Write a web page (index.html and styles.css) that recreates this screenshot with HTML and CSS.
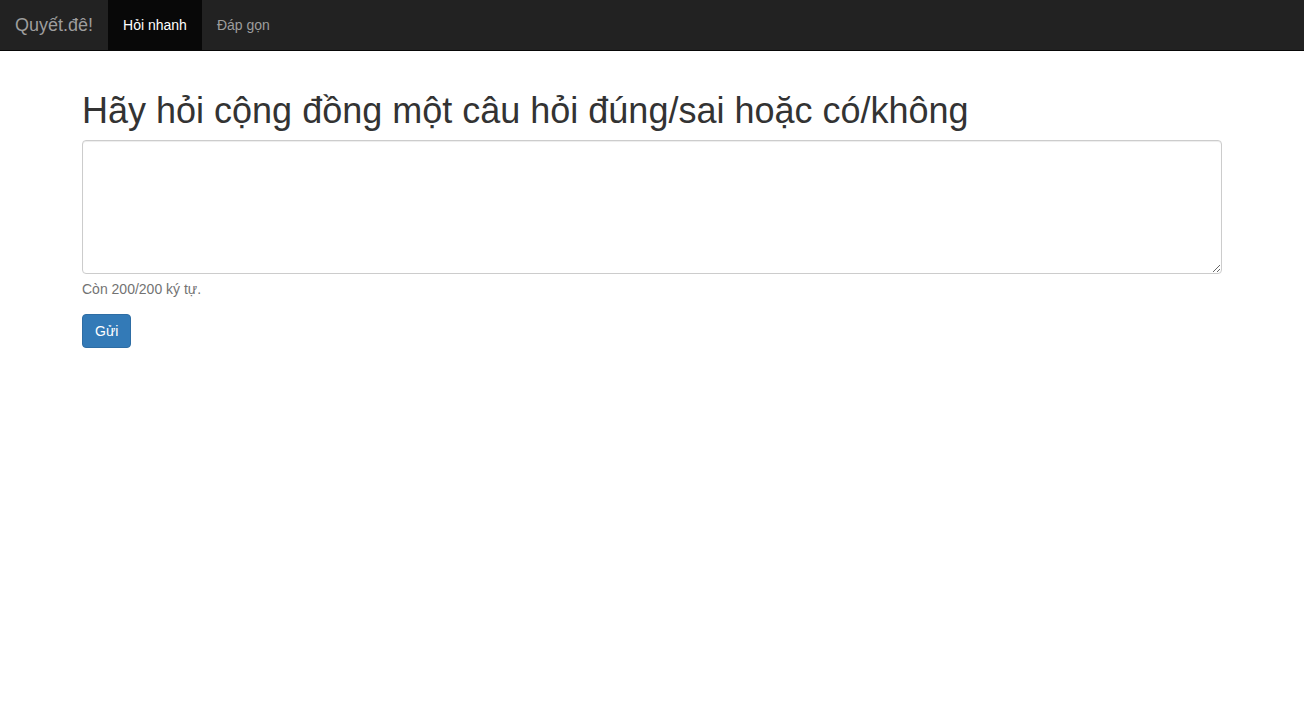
FILE: index.html
```html
<!DOCTYPE html>
<html lang="vi">
<head>
<meta charset="utf-8">
<title>Quyết.đê!</title>
<link rel="stylesheet" href="styles.css">
</head>
<body>
<nav class="navbar">
  <a class="brand" href="#">Quyết.đê!</a>
  <ul class="nav">
    <li><a class="nav-link active" href="#">Hỏi nhanh</a></li>
    <li><a class="nav-link" href="#">Đáp gọn</a></li>
  </ul>
</nav>
<main class="container">
  <h1 class="title">Hãy hỏi cộng đồng một câu hỏi đúng/sai hoặc có/không</h1>
  <form class="ask-form">
    <div class="form-group">
      <textarea class="form-control" rows="5"></textarea>
      <p class="help-block">Còn 200/200 ký tự.</p>
    </div>
    <button type="button" class="btn">Gửi</button>
  </form>
</main>
</body>
</html>
```

FILE: styles.css
```css
* { box-sizing: border-box; }
html, body { margin: 0; padding: 0; }
body {
  font-family: "Liberation Sans", Arial, Helvetica, sans-serif;
  font-size: 14px;
  line-height: 20px;
  color: #333;
  background: #fff;
}
.navbar {
  display: flex;
  align-items: stretch;
  height: 51px;
  background: #222;
  border-bottom: 1px solid #080808;
}
.brand {
  display: block;
  padding: 15px;
  height: 50px;
  font-size: 18px;
  line-height: 20px;
  color: #9d9d9d;
  text-decoration: none;
}
.nav {
  display: flex;
  list-style: none;
  margin: 0;
  padding: 0;
}
.nav-link {
  display: block;
  padding: 15px;
  line-height: 20px;
  color: #9d9d9d;
  text-decoration: none;
}
.nav-link.active {
  background: #080808;
  color: #fff;
}
.container {
  width: 1170px;
  margin: 0 auto;
  padding: 20px 15px 0;
}
.title {
  font-size: 36px;
  font-weight: 500;
  line-height: 1.1;
  margin: 20px 0 9px;
  color: #333;
}
.ask-form { margin: 0; }
.form-group { margin-bottom: 15px; }
.form-control {
  display: block;
  width: 100%;
  height: 134px;
  padding: 6px 12px;
  font-family: inherit;
  font-size: 14px;
  line-height: 20px;
  color: #555;
  background: #fff;
  border: 1px solid #ccc;
  border-radius: 4px;
  box-shadow: inset 0 1px 1px rgba(0,0,0,.075);
  resize: vertical;
  margin: 0;
}
.help-block {
  margin: 5px 0 10px;
  color: #737373;
}
.btn {
  display: inline-block;
  padding: 6px 12px;
  font-family: inherit;
  font-size: 14px;
  line-height: 20px;
  color: #fff;
  background: #337ab7;
  border: 1px solid #2e6da4;
  border-radius: 4px;
  cursor: pointer;
}
```
